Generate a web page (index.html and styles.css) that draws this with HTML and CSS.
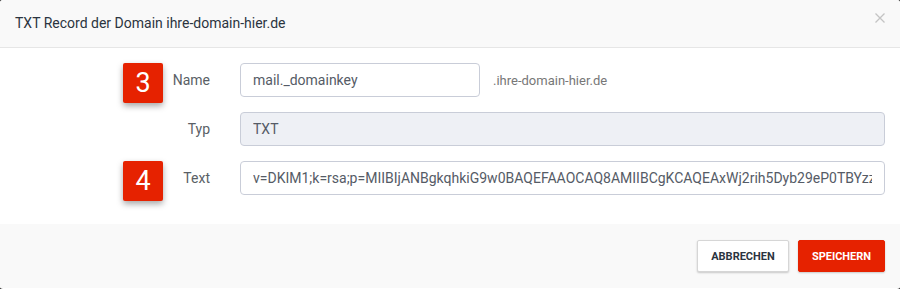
FILE: index.html
```html
<!DOCTYPE html>
<html lang="de">
<head>
  <meta charset="UTF-8" />
  <title>TXT Record</title>
  <link rel="stylesheet" href="styles.css">
</head>
<body>
  <div class="modal">
    <div class="modal-header">
      <h4>TXT Record der Domain ihre-domain-hier.de</h4>
      <button class="close" aria-label="Schließen">
        <svg width="10" height="10" viewBox="0 0 10 10"><path d="M0.5 0.5L9.5 9.5M9.5 0.5L0.5 9.5" stroke="#c4c4c4" stroke-width="1.3" fill="none"/></svg>
      </button>
    </div>

    <form class="modal-body">
      <div class="form-row">
        <label class="row-label"><span class="step">3</span>Name</label>
        <div class="field">
          <input type="text" class="short" value="mail._domainkey" />
          <span class="suffix">.ihre-domain-hier.de</span>
        </div>
      </div>

      <div class="form-row">
        <label class="row-label">Typ</label>
        <div class="field">
          <input type="text" value="TXT" readonly />
        </div>
      </div>

      <div class="form-row">
        <label class="row-label"><span class="step">4</span>Text</label>
        <div class="field">
          <input type="text" value="v=DKIM1;k=rsa;p=MIIBIjANBgkqhkiG9w0BAQEFAAOCAQ8AMIIBCgKCAQEAxWj2rih5Dyb29eP0TBYzzaQ" />
        </div>
      </div>
    </form>

    <div class="modal-footer">
      <button class="btn btn-default">Abbrechen</button>
      <button class="btn btn-primary">Speichern</button>
    </div>
  </div>
</body>
</html>
```

FILE: styles.css
```css
:root {
  --red: #e62200;
  --text: #333a44;
  --muted: #5a5f66;
  --border: #c9cdd8;
  --bg-soft: #f9f9f9;
}

* {
  margin: 0;
  padding: 0;
  box-sizing: border-box;
}

body {
  font-family: Roboto, 'Liberation Sans', sans-serif;
  background-color: #3a3a3a;
  color: var(--text);
}

.modal {
  width: 900px;
  height: 289px;
  background: #fff;
  border-radius: 3px;
  overflow: hidden;
}

.modal-header {
  height: 48px;
  background: var(--bg-soft);
  border-bottom: 1px solid #e6e6e6;
  display: flex;
  align-items: center;
  justify-content: space-between;
  padding: 0 15px;
}

.modal-header h4 {
  font-size: 14px;
  font-weight: 400;
  color: #2b3440;
  margin-top: -2px;
}

.close {
  background: none;
  border: none;
  display: flex;
  margin-top: -12px;
}

.modal-body {
  padding: 15px 15px 29px 0;
  display: flex;
  flex-direction: column;
  gap: 15px;
}

.form-row {
  display: grid;
  grid-template-columns: 240px 1fr;
  align-items: center;
  height: 34px;
}

.row-label {
  position: relative;
  text-align: right;
  padding-right: 30px;
  font-size: 14px;
  color: var(--muted);
}

.step {
  position: absolute;
  left: 123px;
  top: 50%;
  margin-top: -17px;
  width: 40px;
  height: 40px;
  background: var(--red);
  color: #fff;
  font-size: 27px;
  line-height: 40px;
  text-align: center;
  border-radius: 2px;
  box-shadow: 0 3px 6px rgba(0, 0, 0, 0.35);
}

.field {
  display: flex;
  align-items: center;
}

input {
  width: 100%;
  height: 34px;
  padding: 0 12px;
  border: 1px solid var(--border);
  border-radius: 4px;
  font-family: inherit;
  font-size: 14px;
  color: #555b66;
  background: #fff;
  outline: none;
}

input[readonly] {
  background: #eef0f5;
}

input.short {
  width: 240px;
}

.suffix {
  margin-left: 13px;
  font-size: 13px;
  color: #777;
}

.modal-footer {
  background: var(--bg-soft);
  height: 64px;
  display: flex;
  justify-content: flex-end;
  align-items: flex-start;
  gap: 9px;
  padding: 16px 15px 0;
}

.btn {
  height: 32px;
  background: #fff;
  border: 1px solid #d6d6d6;
  border-radius: 2px;
  box-shadow: 0 1px 2px rgba(0, 0, 0, 0.2);
  font-family: inherit;
  font-size: 11px;
  font-weight: 700;
  text-transform: uppercase;
  color: #2b3440;
  cursor: pointer;
}

.btn-default {
  width: 92px;
}

.btn-primary {
  width: 87px;
  background: var(--red);
  border-color: var(--red);
  color: #fff;
}
```
